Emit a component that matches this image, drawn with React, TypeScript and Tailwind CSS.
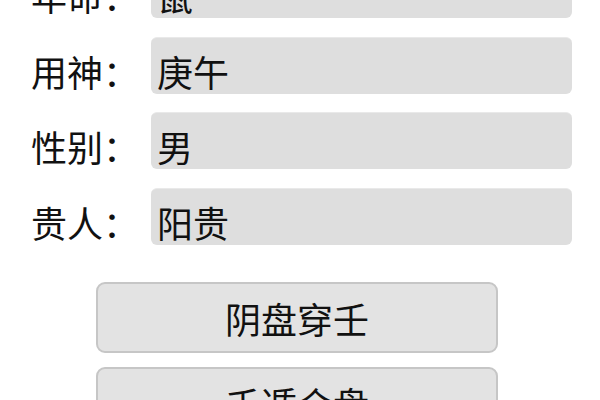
import React from "react";

const rows: [string, string][] = [
  ["年命：", "鼠"],
  ["用神：", "庚午"],
  ["性别：", "男"],
  ["贵人：", "阳贵"],
];

export default function App() {
  return (
    <div
      className="w-[600px] h-[400px] overflow-hidden bg-white text-[#111111]"
      style={{ fontFamily: '"Noto Sans CJK SC", "Noto Sans", sans-serif' }}
    >
      <div className="mt-[-39px] flex flex-col gap-[18.5px] pl-[31px]">
        {rows.map(([label, value]) => (
          <div key={label} className="flex items-end h-[57px]">
            <div className="w-[120px] text-[36px] leading-[36px] pb-[5px] whitespace-nowrap">
              {label}
            </div>
            <div className="w-[421px] h-[57px] rounded-[6px] bg-[#dedede] border-t border-[#e9e9e9] flex items-end pl-[6px] pb-[5px] text-[36px] leading-[36px]">
              {value}
            </div>
          </div>
        ))}
      </div>
      <div className="mt-[37.5px] flex flex-col gap-[14px] pl-[96px]">
        {["阴盘穿壬", "壬遁合盘"].map((t) => (
          <button
            key={t}
            className="w-[402px] h-[71px] rounded-[9px] border-2 border-[#c6c6c6] bg-[#e3e3e3] text-[36px] leading-[36px] flex items-center justify-center text-[#111111]"
          >
            {t}
          </button>
        ))}
      </div>
    </div>
  );
}
